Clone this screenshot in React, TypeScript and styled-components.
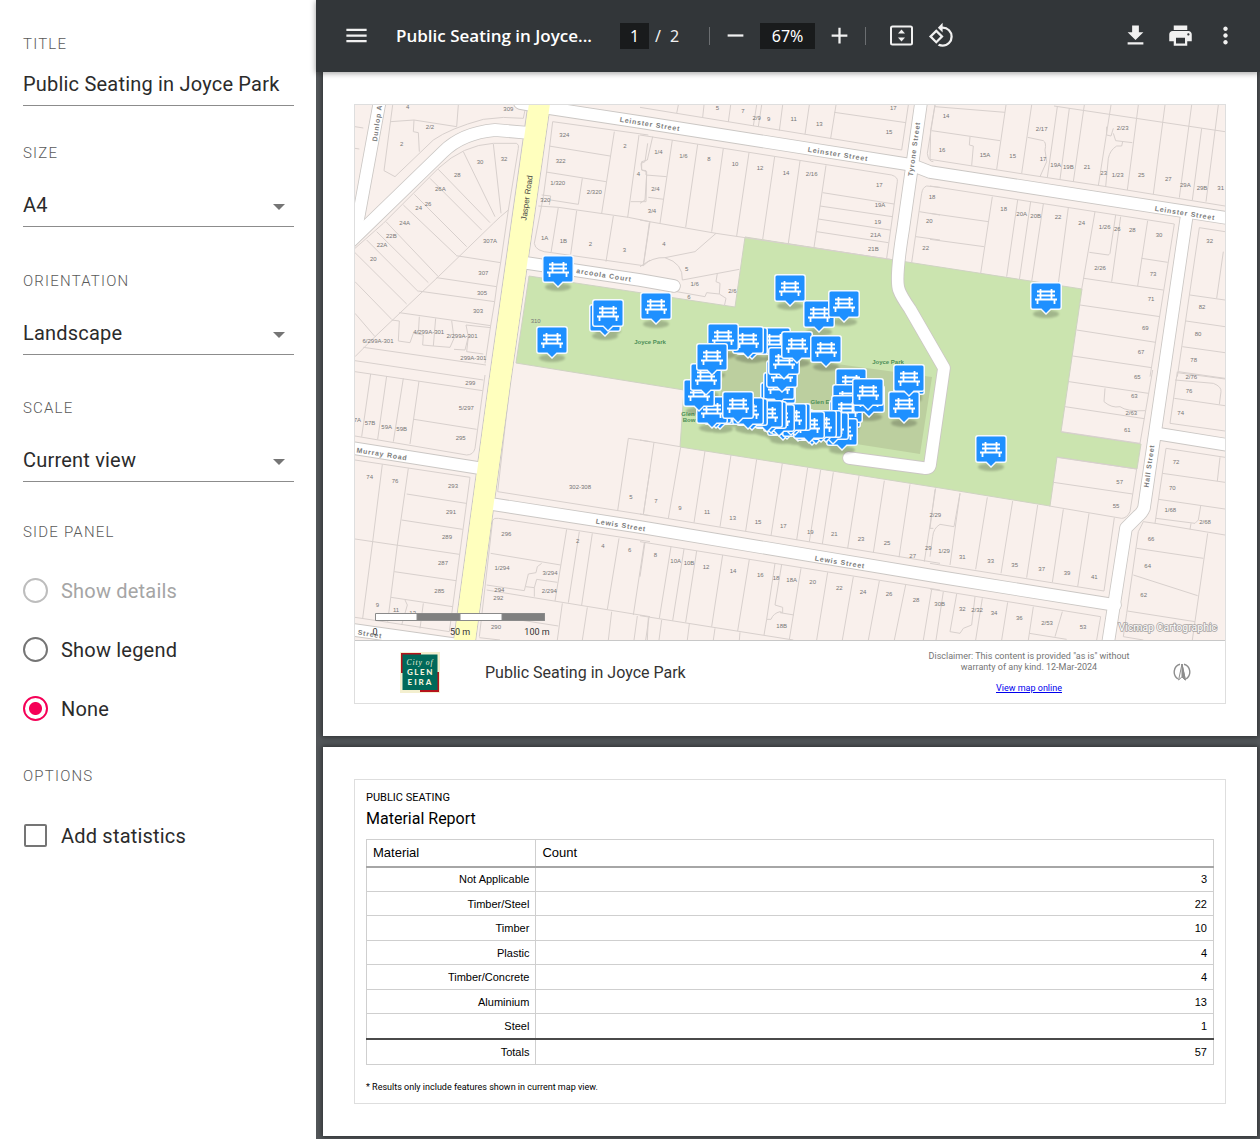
import React from "react";
import styled, { createGlobalStyle, css } from "styled-components";
import {
  MdAdd,
  MdFileDownload,
  MdMenu,
  MdMoreVert,
  MdPrint,
  MdRemove,
  MdRotate90DegreesCcw,
} from "react-icons/md";

const roboto = `Roboto, "Liberation Sans", sans-serif`;
const arial = `"Liberation Sans", Arial, sans-serif`;

const GlobalStyle = createGlobalStyle`
  *, *::before, *::after { box-sizing: border-box; }
  body { margin: 0; background: #fff; font-family: ${roboto}; }
`;

/* ---------- Shell ---------- */

const Shell = styled.div`
  display: flex;
  min-height: 100vh;
`;

const Sidebar = styled.form`
  flex: 0 0 316px;
  padding: 34px 22px 34px 23px;
  background: #fff;
`;

const Viewer = styled.main`
  flex: 1;
  min-width: 0;
  background: #525659;
`;

/* ---------- Sidebar form ---------- */

const Field = styled.div<{ $gap: number; $after: number }>`
  display: flex;
  flex-direction: column;
  gap: ${(p) => p.$gap}px;
  margin-bottom: ${(p) => p.$after}px;
`;

const captionText = css`
  font-size: 15px;
  font-weight: 300;
  line-height: 20px;
  letter-spacing: 0.08em;
  text-transform: uppercase;
  color: #5a5a5a;
`;

const FieldLabel = styled.label`
  ${captionText}
`;

const controlText = css`
  font-family: ${roboto};
  font-size: 20px;
  letter-spacing: 0.01em;
  color: #2b2b2b;
`;

const TextInput = styled.input`
  ${controlText}
  width: 100%;
  height: 42px;
  padding: 0 0 2px;
  border: 0;
  border-bottom: 1px solid #8c8c8c;
  background: none;
  outline: none;
`;

const SelectBox = styled.div`
  display: grid;
  align-items: center;
  > * {
    grid-area: 1 / 1;
  }
`;

const Select = styled.select`
  ${controlText}
  appearance: none;
  width: 100%;
  height: 44px;
  padding: 0;
  border: 0;
  border-bottom: 1px solid #8c8c8c;
  border-radius: 0;
  background: none;
  outline: none;
`;

const Caret = styled.span`
  justify-self: end;
  margin: 4px 9px 0 0;
  border: 6px solid transparent;
  border-top-color: #757575;
  border-bottom: 0;
  pointer-events: none;
`;

const OptionGroup = styled.fieldset<{ $gap: number; $after: number }>`
  margin: 0 0 ${(p) => p.$after}px;
  padding: 0;
  border: 0;
  > legend {
    ${captionText}
    padding: 0;
    margin-bottom: ${(p) => p.$gap}px;
  }
`;

const OptionRow = styled.label<{ $muted?: boolean }>`
  ${controlText}
  display: flex;
  align-items: center;
  gap: 13px;
  height: 59px;
  color: ${(p) => (p.$muted ? "#a5a5a5" : "#2b2b2b")};
`;

const Radio = styled.input`
  appearance: none;
  flex: none;
  width: 25px;
  height: 25px;
  margin: 0;
  border: 2px solid #757575;
  border-radius: 50%;
  &:checked {
    border-color: #f50057;
    background: radial-gradient(circle, #f50057 6px, transparent 7px);
  }
  &:disabled {
    border-color: #bdbdbd;
  }
`;

const Checkbox = styled.input`
  appearance: none;
  flex: none;
  width: 23px;
  height: 23px;
  margin: 1px;
  border: 2px solid #757575;
  border-radius: 2px;
`;

/* ---------- Toolbar ---------- */

const Toolbar = styled.header`
  display: flex;
  align-items: center;
  height: 72px;
  padding: 0 21px 1px 27px;
  background: #323639;
  color: #f1f1f1;
  font-family: "Noto Sans", "Open Sans", sans-serif;
  font-size: 16px;
  position: relative;
  box-shadow: 0 1px 6px rgba(0, 0, 0, 0.4);
`;

const DocTitle = styled.h1`
  width: 196px;
  margin: 0 28px 0 26px;
  font-family: "Open Sans", "Noto Sans", sans-serif;
  font-size: 17px;
  font-weight: 600;
  line-height: 24px;
  white-space: nowrap;
  color: #fff;
`;

const IconButton = styled.button`
  display: grid;
  place-items: center;
  flex: none;
  width: 27px;
  height: 27px;
  padding: 0;
  border: 0;
  background: none;
  color: inherit;
  svg {
    width: 27px;
    height: 27px;
  }
`;

const ToolInput = styled.input<{ $width: number }>`
  width: ${(p) => p.$width}px;
  height: 26px;
  padding: 0;
  border: 0;
  background: #191b1c;
  color: #fff;
  font: inherit;
  text-align: center;
`;

const PageCount = styled.span`
  display: flex;
  gap: 9px;
  margin: 0 30px 0 6px;
`;

const Divider = styled.span`
  width: 1px;
  height: 18px;
  background: #6b6e71;
`;

const ZoomGroup = styled.div`
  display: flex;
  align-items: center;
  gap: 11px;
  margin: 0 12px;
`;

const PageTools = styled.div`
  display: flex;
  gap: 13px;
  margin-left: 22px;
`;

const FileTools = styled.div`
  display: flex;
  gap: 18px;
  margin-left: auto;
`;

/* ---------- Document pages ---------- */

const Pages = styled.div`
  display: flex;
  flex-direction: column;
  gap: 11px;
  padding: 0 3px 5px 7px;
`;

const Paper = styled.section`
  padding: 32px 31px;
  background: #fff;
  color: #000;
  box-shadow: 0 0 5px 1px rgba(0, 0, 0, 0.45);
`;

const Frame = styled.div`
  border: 1px solid #dedede;
`;

const MapCanvas = styled.svg`
  display: block;
  width: 100%;
  height: auto;
`;

const MapFooter = styled.footer`
  display: flex;
  align-items: center;
  height: 63px;
  padding: 0 34px 0 45px;
  border-top: 1px solid #c8c8c8;
`;

const MapTitle = styled.h2`
  margin: 0 auto 0 45px;
  font-size: 16px;
  font-weight: 400;
  color: #333;
`;

const Disclaimer = styled.div`
  width: 210px;
  margin-right: 39px;
  font-size: 9px;
  line-height: 11px;
  text-align: center;
  color: #757575;
`;

const MapLink = styled.a`
  display: inline-block;
  margin-top: 10px;
  color: #0000ee;
`;

const Report = styled(Frame)`
  padding: 10px 11px;
`;

const Eyebrow = styled.p`
  margin: 0;
  font-size: 11px;
  line-height: 16px;
`;

const ReportTitle = styled.h2`
  margin: 0 0 8px;
  font-size: 16px;
  font-weight: 400;
  line-height: 25px;
`;

const Table = styled.table`
  width: 100%;
  border: 1px solid #c4c4c4;
  border-collapse: collapse;
  font-family: ${arial};
  font-size: 11px;
  line-height: 14px;
  th,
  td {
    height: 24px;
    padding: 0 6px;
    border: 1px solid #cfcfcf;
    font-weight: 400;
    text-align: right;
  }
  th:first-child {
    width: 20%;
  }
  thead th {
    height: 27px;
    border-bottom: 2px solid #a6a6a6;
    font-size: 13px;
    text-align: left;
  }
  tbody tr:nth-child(odd) > * {
    height: 25px;
  }
  tfoot th,
  tfoot td {
    height: 26px;
    border-top: 2px solid #4a4a4a;
  }
`;

const Footnote = styled.p`
  margin: 17px 0 0;
  font-size: 9px;
  line-height: 11px;
`;

/* ---------- Map data ---------- */

type Label = [number, number, string];
type Tile = { x: number; y: number; lots: string; labels: Label[] };

/* Each tile is surveyed at three units to one map unit. */
const TILES: Tile[] = [
  {
    x: 350,
    y: 100,
    lots:
      "M15 80L40 84M15 145L28 147M122 65L192 60L190 95L205 98L208 155M192 60L320 80L325 15M128 15L102 212L135 230L250 120Q300 85 400 58Q460 48 520 55L528 15" +
      "M15 445L100 370L265 205Q340 135 430 130L500 130Q508 135 505 145L475 330M15 770L75 710L265 530L430 370Q450 350 475 330" +
      "M340 155L435 350M430 132L453 340M265 208L420 368M240 235L395 390M193 283L350 440M160 315L318 465M108 365L265 530M80 395L235 548M50 420L205 575M15 458L170 612M15 545L125 658M15 640L75 710" +
      "M318 467L452 488L475 330M260 533L440 560L452 488M205 573L434 605L440 560M148 638L422 677L434 605M422 677L405 790M40 742L408 795M15 782L400 840" +
      "M125 660L148 663L145 723L180 728L190 700L205 702L208 650M205 702L220 705L218 735L250 738L257 655M250 738L300 742L312 715L305 662M312 748L345 750L355 710L348 675L422 683M355 710L350 755L400 762" +
      "M608 65L895 105M608 65L590 215L580 290L553 430Q555 455 605 458L880 497L900 480M597 138L780 168M588 216L768 245M793 95L755 340M697 235L685 313L602 300M575 285L602 288L598 315M565 318L625 322L835 352L900 365M867 105L833 352M625 322L603 458M680 332L662 463M790 348L768 485M900 365L880 497M893 130L885 185L873 190L875 210L890 215L888 305L842 305",
    labels: [
      [173, 20, "4"], [475, 28, "309"], [240, 80, "2/2"], [155, 132, "2"], [462, 178, "32"], [390, 186, "30"], [322, 224, "28"],
      [271, 266, "26A"], [234, 312, "26"], [206, 325, "24"], [164, 368, "24A"], [124, 408, "22B"], [96, 436, "22A"], [70, 476, "20"],
      [420, 424, "307A"], [400, 518, "307"], [396, 578, "305"], [384, 634, "303"], [236, 697, "4/299A-301"], [336, 708, "2/299A-301"],
      [84, 722, "6/299A-301"], [370, 773, "299A-301"], [643, 106, "324"], [632, 184, "322"], [623, 250, "1/320"], [586, 300, "320"],
      [733, 275, "2/320"], [825, 138, "2"], [865, 222, "4"], [584, 413, "1A"], [640, 422, "1B"], [721, 432, "2"], [823, 450, "3"], [557, 664, "310"],
    ],
  },
  {
    x: 350,
    y: 370,
    lots:
      "M15 5L398 62M62 12L35 200M110 18L83 208M160 25L130 215M207 33L180 222M192 148L380 178M15 198L350 255Q370 255 375 235L405 15" +
      "M15 270L360 322L298 785L15 742M97 283L68 515L38 745M175 295L142 525L113 755M170 372L348 400M155 450L338 478M15 507L328 553M133 605L318 632M123 682L308 710M165 690L172 705L155 765M220 700L210 775" +
      "M483 15L443 365L900 437M900 215L835 205L803 422M900 300L880 433M388 800L428 450Q432 443 445 445L900 515" +
      "M422 550L632 585M650 478L615 693M688 485L655 698M727 490L695 705M807 505L772 718M883 518L850 735M410 645L523 662L535 612L558 608L562 590L575 580M527 650L553 653L560 628L622 637M553 653L553 680M410 660L900 740" +
      "M637 700L622 810M400 733L625 768M388 803L450 810M712 712L697 810M785 725L775 810M862 738L852 810M897 742L887 810",
    labels: [
      [361, 38, "299"], [349, 113, "5/297"], [332, 203, "295"], [22, 150, "7A"], [60, 159, "57B"], [110, 171, "59A"], [155, 176, "59B"],
      [59, 320, "74"], [135, 334, "76"], [309, 347, "293"], [303, 426, "291"], [291, 502, "289"], [279, 578, "287"], [268, 662, "285"],
      [82, 704, "9"], [138, 720, "11"], [188, 728, "13"], [690, 352, "302-308"], [843, 380, "5"], [469, 492, "296"], [456, 594, "1/294"],
      [600, 610, "3/294"], [448, 659, "294"], [598, 663, "2/294"], [445, 685, "292"], [438, 772, "290"], [683, 514, "2"], [759, 527, "4"], [839, 540, "6"],
    ],
  },
  {
    x: 640,
    y: 100,
    lots:
      "M0 22L110 40L785 150L805 15M115 15L110 40M192 15L188 52M272 15L265 66M350 15L340 78M365 15L355 80M428 15L418 92M508 15L495 103M588 15L572 115M583 37L798 68" +
      "M0 105L755 225Q775 232 772 245L740 475M97 120L60 370M173 133L137 382M250 145L215 395M327 158L290 408M404 170L368 418M480 183L445 430M558 196L522 442M0 360L228 400L752 478M548 278L762 312M540 318L757 350M535 357L750 390M530 395L745 428" +
      "M38 110L22 180L5 185L5 210L18 212L18 225L80 230M20 225L15 300L0 310M25 292L72 298M28 368L10 495M0 500Q40 470 75 473L165 455L228 400M75 473Q130 490 127 540L298 508M232 520L228 545L240 550L238 582L200 578L195 590L110 575M238 582L258 595L253 618" +
      "M885 15L862 160Q865 185 880 185M900 262L860 258Q848 262 845 280L815 488M838 335L900 345M828 410L900 420",
    labels: [
      [232, 24, "5"], [309, 34, "7"], [350, 53, "2/9"], [386, 58, "9"], [461, 58, "11"], [538, 72, "13"], [760, 25, "17"], [747, 97, "15"],
      [55, 155, "1/4"], [130, 167, "1/6"], [207, 178, "8"], [285, 192, "10"], [360, 204, "12"], [438, 218, "14"], [515, 222, "2/16"],
      [718, 256, "17"], [720, 316, "19A"], [713, 365, "19"], [707, 404, "21A"], [700, 446, "21B"], [46, 268, "2/4"], [36, 333, "3/4"],
      [72, 432, "4"], [140, 508, "5"], [164, 552, "1/6"], [147, 590, "6"], [277, 572, "2/6"], [876, 292, "18"], [868, 364, "20"], [857, 444, "22"],
    ],
  },
  {
    x: 640,
    y: 370,
    lots:
      "M0 210L120 230M42 217L10 433M122 232L85 445M195 243L162 458M273 255L240 470M350 268L317 483M427 280L393 497M503 293L470 510M542 300L508 515M580 307L547 522M657 318L623 535M733 332L700 548M810 343L777 562M887 355L853 575M0 432L900 580" +
      "M0 515L900 660M15 517L0 620M93 530L58 745M132 537L98 752M170 543L137 757M248 555L215 770M328 568L293 783M405 580L380 748L393 748Q400 730 420 725L428 728L428 712L405 705L425 583M462 735L420 728M483 595L448 808M563 607L530 810M640 620L607 810M718 633L685 810M797 645L763 810M875 658L850 810M380 748L372 795" +
      "M0 737L460 810M25 742L22 810M65 750L57 810M148 762L142 810M225 775L220 810M300 787L298 810",
    labels: [
      [48, 392, "7"], [120, 415, "9"], [201, 427, "11"], [278, 443, "13"], [354, 455, "15"], [430, 467, "17"], [511, 485, "19"], [583, 491, "21"],
      [663, 508, "23"], [741, 520, "25"], [818, 558, "27"], [865, 535, "29"], [46, 556, "8"], [107, 573, "10A"], [147, 579, "10B"],
      [198, 590, "12"], [279, 602, "14"], [361, 614, "16"], [408, 623, "18"], [455, 630, "18A"], [518, 637, "20"], [598, 655, "22"],
      [669, 667, "24"], [747, 672, "26"], [828, 689, "28"], [425, 769, "18B"],
    ],
  },
  {
    x: 930,
    y: 100,
    lots:
      "M15 15L2 90L0 178L280 222L510 257L885 318M15 20L225 37M5 92L210 122M120 110L118 135L130 138L125 197M228 15L200 208M305 15L275 220M293 112L340 122Q350 128 345 150L350 185L330 230M382 20L352 232M418 25L390 238M463 15L430 245M372 18L885 95M543 15L505 257M530 80L530 105L543 108L550 85M550 100L557 122L607 128M578 125L575 138L560 138Q540 150 535 175L527 260M625 15L592 270M705 15L670 282M785 15L748 293M815 85L787 300M865 15L828 305" +
      "M0 258L733 372L660 830M0 340L175 365M0 418L162 440M187 290L152 520M263 300L230 530M302 305L268 540M340 312L305 545M415 323L385 550M495 335L455 568M557 345L540 460L535 465L478 457M572 350L545 545M653 362L623 558M635 475L713 487M462 535L700 570M450 615L690 650M440 690L677 727M428 768L665 803" +
      "M885 395L808 383L742 830M880 455L860 595M780 585L885 600M768 663L885 680M757 740L885 758M742 818L885 837",
    labels: [
      [48, 49, "14"], [36, 150, "16"], [165, 164, "15A"], [248, 167, "15"], [335, 87, "2/17"], [339, 178, "17"], [377, 195, "19A"], [415, 202, "19B"],
      [471, 202, "21"], [521, 219, "23"], [578, 83, "2/23"], [563, 226, "1/23"], [634, 224, "25"], [715, 236, "27"], [766, 256, "29A"],
      [816, 264, "29B"], [872, 265, "31"], [221, 327, "18"], [275, 343, "20A"], [317, 349, "20B"], [384, 352, "22"], [455, 368, "24"],
      [524, 381, "1/26"], [562, 388, "26"], [607, 391, "28"], [687, 405, "30"], [839, 423, "32"], [510, 504, "2/26"], [669, 523, "73"],
      [663, 597, "71"], [646, 683, "69"], [633, 757, "67"], [816, 620, "82"], [804, 702, "80"], [791, 780, "78"],
    ],
  },
  {
    x: 930,
    y: 370,
    lots:
      "M417 35L655 70M405 110L643 146M525 55L522 95Q545 115 570 110Q590 125 645 122M395 185L630 220L668 0M380 262L620 297L600 425Q590 445 575 445L358 408M370 337L608 372" +
      "M742 5L720 160L885 183M745 5L885 25M735 30L850 40Q875 50 873 65L868 103M733 85L885 107M885 262L708 235L675 460L640 455L625 485L590 730L580 800M697 310L885 337M870 262L862 333M686 388L885 417M812 408L805 450L795 460L678 445M675 460L885 495M783 460L780 478M833 490L787 810M620 535L820 565M610 615L803 677M592 723L795 755M580 800L640 810" +
      "M90 370L60 585M172 382L137 598M248 393L213 610M323 405L290 623M400 418L367 637M477 430L443 650M553 443L522 663L0 580M90 370L72 470L30 463Q10 475 8 500L0 560M15 358L0 475L10 475" +
      "M0 657L512 740L500 810M40 665L18 810M80 672L60 785L90 790L100 775L125 765L135 680M157 685L137 810M233 697L215 810M310 710L295 810M298 790L410 808M397 725L375 800",
    labels: [
      [622, 22, "65"], [613, 79, "63"], [604, 130, "2/63"], [592, 180, "61"], [569, 337, "57"], [558, 409, "55"], [784, 20, "2/76"], [777, 62, "76"],
      [752, 128, "74"], [738, 277, "72"], [727, 353, "70"], [721, 421, "1/68"], [825, 457, "2/68"], [663, 506, "66"], [653, 587, "64"], [641, 674, "62"],
      [16, 436, "2/29"], [42, 544, "1/29"], [97, 560, "31"], [182, 572, "33"], [254, 584, "35"], [335, 596, "37"], [411, 608, "39"], [493, 620, "41"],
      [29, 701, "30B"], [97, 716, "32"], [141, 721, "2/32"], [192, 730, "34"], [268, 743, "36"], [351, 759, "2/53"], [459, 772, "53"], [625, 773, "60"],
    ],
  },
];

const ROADS = [
  "M380 100L355 236",
  "M344 248L443 152Q462 133 495 130L530 133",
  "M520 103L548 108L640 122L912 165L930 172L1240 220",
  "M922 96L903 230Q895 280 899 290Q901 296 910 309L944 368L930 465Q929 469 924 468L849 458",
  "M520 262L640 280L674 286",
  "M340 446L485 469",
  "M340 628L460 645",
  "M485 503L640 527L940 577L1115 605",
  "M1187 214L1144 508Q1142 513 1138 516L1126 528L1107 650",
  "M1160 434L1240 447",
];

const STREET_NAMES: { x: number; y: number; turn: number; name: string }[] = [
  { x: 650, y: 124, turn: 9, name: "Leinster Street" },
  { x: 838, y: 154, turn: 9, name: "Leinster Street" },
  { x: 1185, y: 213, turn: 9, name: "Leinster Street" },
  { x: 604, y: 275, turn: 9, name: "arcoola Court" },
  { x: 382, y: 454, turn: 9, name: "Murray Road" },
  { x: 370, y: 634, turn: 9, name: "Street" },
  { x: 621, y: 525, turn: 9, name: "Lewis Street" },
  { x: 840, y: 562, turn: 9, name: "Lewis Street" },
  { x: 377, y: 123, turn: -82, name: "Dunlop A" },
  { x: 914, y: 149, turn: -82, name: "Tyrone Street" },
  { x: 1149, y: 466, turn: -82, name: "Hall Street" },
];

/* Top centre of every seat marker, back to front. */
const SEATS: [number, number][] = [
  [1046, 282], [991, 435], [558, 255], [605, 304], [608, 299], [552, 326], [656, 292], [790, 274], [819, 300], [844, 290],
  [775, 327], [752, 327], [748, 326], [723, 323], [720, 397], [716, 396], [712, 396], [699, 379], [706, 363], [712, 343],
  [776, 382], [780, 376], [779, 372], [782, 360], [784, 347], [797, 331], [826, 335],
  [909, 367], [904, 391], [909, 364], [851, 368], [848, 384], [845, 400], [847, 395], [869, 385], [868, 378],
  [783, 408], [787, 407], [798, 409], [812, 413], [816, 412], [828, 412],
  [842, 418], [833, 412], [826, 410], [821, 410], [809, 411], [795, 403], [791, 403],
  [779, 404], [771, 401], [767, 400], [752, 398], [748, 397], [738, 391],
];

/* ---------- Drawings ---------- */

function SeatMarker({ x, y }: { x: number; y: number }) {
  return (
    <g transform={`translate(${x} ${y})`}>
      <path d="M-13 0H13Q16 0 16 3V25Q16 28 13 28H5L0 33L-5 28H-13Q-16 28 -16 25V3Q-16 0 -13 0Z" fill="#f4f9ff" />
      <path d="M-13 1.5H13Q14.5 1.5 14.5 3V25Q14.5 26.5 13 26.5H4.5L0 31L-4.5 26.5H-13Q-14.5 26.5 -14.5 25V3Q-14.5 1.5 -13 1.5Z" fill="#1e90ff" />
      <path d="M-9 9.5H9M-9 13.5H9M-11 17.5H11M-5.5 7V17M5.5 7V17M-8.5 17V22M8.5 17V22" stroke="#fff" strokeWidth="1.8" fill="none" />
    </g>
  );
}

function ParkMap() {
  return (
    <MapCanvas viewBox="355 105 870 535" role="img" aria-label="Map of public seating in Joyce Park">
      <defs>
        <filter id="soft" x="-50%" y="-50%" width="200%" height="200%">
          <feGaussianBlur stdDeviation="1.2" />
        </filter>
      </defs>
      <rect x="340" y="90" width="900" height="560" fill="#f9f0ec" />
      <path
        d="M529 276L735 307L745 237L1082 289L1061 432L1141 444L1137 469L1057 457L1050 506L940 488L680 447L684 390L516 363Z"
        fill="#cbe4af"
        stroke="#cfd3c2"
      />
      <path d="M727 349L932 377L920 454L716 422Z" fill="#bccf9f" />
      {TILES.map((t) => (
        <path
          key={`${t.x}-${t.y}`}
          d={t.lots}
          transform={`translate(${t.x} ${t.y}) scale(${1 / 3})`}
          fill="none"
          stroke="#d8d0cd"
          strokeWidth="3"
        />
      ))}
      <g fill="none" strokeLinecap="round" strokeLinejoin="round">
        {ROADS.map((d) => (
          <path key={d} d={d} stroke="#cbc7c4" strokeWidth="13.5" />
        ))}
        <path d="M529 100H551L511 380L475 645H453L489 380Z" fill="#ffffbe" stroke="#cbc7c4" />
        {ROADS.map((d) => (
          <path key={d} d={d} stroke="#fff" strokeWidth="11.8" />
        ))}
      </g>
      <path d="M529.5 100H550.5L510.5 380L474.5 645H453.5L489.5 380Z" fill="#ffffbe" />
      <g fontFamily="Liberation Sans, Arial, sans-serif" textAnchor="middle" dominantBaseline="central">
        <g fontSize="6" fill="#767676">
          {TILES.flatMap((t) =>
            t.labels.map(([x, y, text]) => (
              <text key={`${t.x}-${t.y}-${x}-${y}`} x={t.x + x / 3} y={t.y + y / 3}>
                {text}
              </text>
            )),
          )}
        </g>
        <g fontSize="7" fontWeight="700" letterSpacing="0.8" fill="#7c7c7c">
          {STREET_NAMES.map((s) => (
            <text key={`${s.x}-${s.y}`} transform={`translate(${s.x} ${s.y}) rotate(${s.turn})`}>
              {s.name}
            </text>
          ))}
        </g>
        <text fontSize="8" fill="#444" transform="translate(527 198) rotate(-82)">
          Jasper Road
        </text>
        <g fontSize="6" fontWeight="700" fill="#4d8f58">
          <text x="650" y="342">Joyce Park</text>
          <text x="888" y="362">Joyce Park</text>
          <text x="820" y="402">Glen E</text>
          <text x="688" y="414">Glen</text>
          <text x="689" y="420">Bow</text>
        </g>
      </g>
      <g fill="#000" opacity="0.2" filter="url(#soft)">
        {SEATS.map(([x, y], i) => (
          <ellipse key={i} cx={x} cy={y + 32} rx="13" ry="4" />
        ))}
      </g>
      {SEATS.map(([x, y], i) => (
        <SeatMarker key={i} x={x} y={y} />
      ))}
      <g stroke="#8a8a8a">
        <path d="M375.5 613.5H544.5V620.5H375.5Z" fill="#fff" />
        <path d="M417 613.5H460V620.5H417ZM502 613.5H544.5V620.5H502Z" fill="#808080" />
      </g>
      <g fontFamily="Roboto, sans-serif" fontSize="9" fill="#333" textAnchor="middle">
        <text x="375" y="635">0</text>
        <text x="460" y="635">50 m</text>
        <text x="537" y="635">100 m</text>
      </g>
      <text
        x="1217"
        y="631"
        textAnchor="end"
        fontFamily="Roboto, sans-serif"
        fontSize="10.5"
        fill="#fff"
        stroke="#a9a5a3"
        strokeWidth="1.6"
        paintOrder="stroke"
      >
        Vicmap Cartographic
      </text>
    </MapCanvas>
  );
}

function CityLogo() {
  return (
    <svg width="40" height="41" viewBox="0 0 40 41" role="img" aria-label="City of Glen Eira">
      <rect width="40" height="41" fill="#f3efcf" />
      <path d="M1 1H21V4H4V21H1ZM39 20V40H20V37H36V20Z" fill="#b5121b" />
      <rect x="2.5" y="2.5" width="35" height="35.5" fill="#00695a" />
      <g textAnchor="middle" fill="#f6f3dc">
        <text x="20" y="12.5" fontFamily="Liberation Serif, serif" fontStyle="italic" fontSize="7.5" letterSpacing="1">City of</text>
        <text x="20.5" y="22.5" fontFamily="Lato, sans-serif" fontWeight="900" fontSize="8" letterSpacing="1.6">GLEN</text>
        <text x="20.5" y="33" fontFamily="Lato, sans-serif" fontWeight="900" fontSize="8" letterSpacing="2">EIRA</text>
      </g>
    </svg>
  );
}

function NorthArrow() {
  return (
    <svg width="18" height="18" viewBox="0 0 18 18" fill="none" stroke="#8d8d8d" aria-label="North">
      <path d="M7 1.2A7.5 8 0 0 0 4.8 15.8M11 1.2A7.5 8 0 0 1 13.2 15.8" strokeWidth="1.4" />
      <path d="M9 1L5.6 17L9 13.8L12.4 17Z" />
      <path d="M9 1V13.8L12.4 17Z" fill="#8d8d8d" />
    </svg>
  );
}

function FitPageIcon() {
  return (
    <svg viewBox="0 0 27 27" fill="none">
      <rect x="3" y="4.5" width="21" height="18" rx="1.5" stroke="currentColor" strokeWidth="2" />
      <path d="M13.5 7.5L17 11.5H10ZM13.5 19.5L10 15.5H17Z" fill="currentColor" />
    </svg>
  );
}

/* ---------- Content ---------- */

const SELECTS = [
  { id: "size", label: "Size", value: "A4", after: 44 },
  { id: "orientation", label: "Orientation", value: "Landscape", after: 43 },
  { id: "scale", label: "Scale", value: "Current view", after: 40 },
];

const MATERIALS: [string, number][] = [
  ["Not Applicable", 3],
  ["Timber/Steel", 22],
  ["Timber", 10],
  ["Plastic", 4],
  ["Timber/Concrete", 4],
  ["Aluminium", 13],
  ["Steel", 1],
];

export default function App() {
  return (
    <>
      <GlobalStyle />
      <Shell>
        <Sidebar>
          <Field $gap={10} $after={37}>
            <FieldLabel htmlFor="title">Title</FieldLabel>
            <TextInput id="title" defaultValue="Public Seating in Joyce Park" />
          </Field>
          {SELECTS.map((s) => (
            <Field key={s.id} $gap={20} $after={s.after}>
              <FieldLabel htmlFor={s.id}>{s.label}</FieldLabel>
              <SelectBox>
                <Select id={s.id}>
                  <option>{s.value}</option>
                </Select>
                <Caret />
              </SelectBox>
            </Field>
          ))}
          <OptionGroup $gap={19} $after={28}>
            <legend>Side panel</legend>
            <OptionRow $muted>
              <Radio type="radio" name="panel" disabled />
              Show details
            </OptionRow>
            <OptionRow>
              <Radio type="radio" name="panel" />
              Show legend
            </OptionRow>
            <OptionRow>
              <Radio type="radio" name="panel" defaultChecked />
              None
            </OptionRow>
          </OptionGroup>
          <OptionGroup $gap={20} $after={0}>
            <legend>Options</legend>
            <OptionRow>
              <Checkbox type="checkbox" />
              Add statistics
            </OptionRow>
          </OptionGroup>
        </Sidebar>

        <Viewer>
          <Toolbar>
            <IconButton aria-label="Menu"><MdMenu /></IconButton>
            <DocTitle>Public Seating in Joyce...</DocTitle>
            <ToolInput $width={29} aria-label="Page number" defaultValue="1" />
            <PageCount>
              <span>/</span>
              <span>2</span>
            </PageCount>
            <Divider />
            <ZoomGroup>
              <IconButton aria-label="Zoom out"><MdRemove /></IconButton>
              <ToolInput $width={55} aria-label="Zoom level" defaultValue="67%" />
              <IconButton aria-label="Zoom in"><MdAdd /></IconButton>
            </ZoomGroup>
            <Divider />
            <PageTools>
              <IconButton aria-label="Fit to page"><FitPageIcon /></IconButton>
              <IconButton aria-label="Rotate"><MdRotate90DegreesCcw /></IconButton>
            </PageTools>
            <FileTools>
              <IconButton aria-label="Download"><MdFileDownload /></IconButton>
              <IconButton aria-label="Print"><MdPrint /></IconButton>
              <IconButton aria-label="More"><MdMoreVert /></IconButton>
            </FileTools>
          </Toolbar>

          <Pages>
            <Paper>
              <Frame>
                <ParkMap />
                <MapFooter>
                  <CityLogo />
                  <MapTitle>Public Seating in Joyce Park</MapTitle>
                  <Disclaimer>
                    Disclaimer: This content is provided "as is" without
                    <br />
                    warranty of any kind. 12-Mar-2024
                    <br />
                    <MapLink href="#map">View map online</MapLink>
                  </Disclaimer>
                  <NorthArrow />
                </MapFooter>
              </Frame>
            </Paper>
            <Paper>
              <Report>
                <Eyebrow>PUBLIC SEATING</Eyebrow>
                <ReportTitle>Material Report</ReportTitle>
                <Table>
                  <thead>
                    <tr>
                      <th scope="col">Material</th>
                      <th scope="col">Count</th>
                    </tr>
                  </thead>
                  <tbody>
                    {MATERIALS.map(([name, count]) => (
                      <tr key={name}>
                        <th scope="row">{name}</th>
                        <td>{count}</td>
                      </tr>
                    ))}
                  </tbody>
                  <tfoot>
                    <tr>
                      <th scope="row">Totals</th>
                      <td>57</td>
                    </tr>
                  </tfoot>
                </Table>
                <Footnote>* Results only include features shown in current map view.</Footnote>
              </Report>
            </Paper>
          </Pages>
        </Viewer>
      </Shell>
    </>
  );
}
